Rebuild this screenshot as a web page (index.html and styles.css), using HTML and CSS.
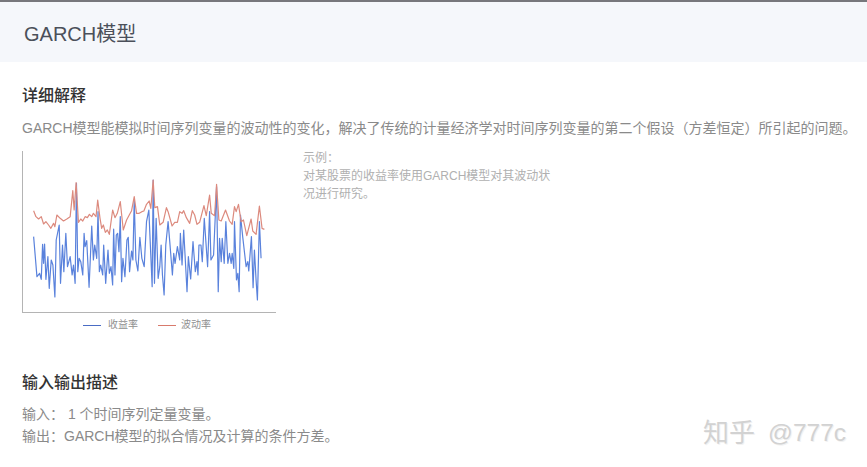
FILE: index.html
```html
<!DOCTYPE html>
<html lang="zh-CN">
<head>
<meta charset="utf-8">
<title>GARCH模型</title>
<link rel="stylesheet" href="styles.css">
</head>
<body>
<header class="title-bar"><h1 class="title">GARCH模型</h1></header>
<main class="content">
  <section class="explain">
    <h2 class="heading">详细解释</h2>
    <p class="lead">GARCH模型能模拟时间序列变量的波动性的变化，解决了传统的计量经济学对时间序列变量的第二个假设（方差恒定）所引起的问题。</p>
    <div class="example">
      <figure class="chart">
        <svg class="plot" viewBox="38 18 762 483" preserveAspectRatio="none">
          <polyline class="line-blue" points="70,275 80,395 88,385 93,403 97,298 100,355 103,297 107,403 113,335 117,430 123,345 128,360 134,456 138,285 147,240 151,415 157,300 161,380 167,265 172,365 180,335 186,390 190,360 195,415 199,115 203,380 207,340 212,350 218,390 222,265 225,305 230,287 237,427 245,243 250,345 254,300 260,340 264,200 268,380 272,360 278,390 281,300 287,415 294,315 298,385 303,365 308,420 311,252 315,390 319,270 323,265 327,320 331,215 335,410 339,340 345,395 351,285 355,277 359,380 365,318 369,345 373,165 378,345 384,378 390,277 396,340 403,365 410,230 417,195 427,425 430,105 434,415 439,220 445,400 450,365 454,300 458,390 463,450 468,300 475,230 480,290 488,390 492,325 496,355 503,305 510,345 512,265 517,360 522,255 532,440 536,335 543,402 550,290 557,380 562,350 565,390 568,300 574,300 578,350 584,220 594,365 600,200 604,345 612,330 621,125 626,440 630,280 635,350 638,280 644,355 649,230 655,355 660,325 665,355 668,325 673,370 675,230 681,405 685,385 689,440 693,210 700,278 710,365 715,350 718,378 726,275 731,428 735,315 740,405 744,465 750,230 755,340"/>
          <polyline class="line-red" points="70,197 77,215 85,222 93,215 100,237 107,230 115,240 122,250 130,235 134,245 140,210 150,220 160,228 170,222 180,215 188,137 192,195 198,113 205,232 212,222 218,228 225,215 232,218 238,208 245,215 250,205 258,215 263,165 270,220 275,250 280,240 286,262 292,255 298,268 308,195 315,218 322,205 331,170 340,255 350,225 358,210 365,197 373,155 380,205 388,205 396,200 402,198 410,178 418,168 423,190 430,105 435,188 443,185 450,240 460,232 470,188 475,200 487,243 495,232 503,232 510,200 517,205 522,197 530,218 540,235 548,197 555,210 562,238 570,232 583,182 590,212 600,150 605,205 615,212 621,118 628,225 635,228 648,195 660,228 668,238 675,185 680,200 687,178 695,230 702,225 712,272 725,222 730,258 740,268 750,183 758,250 765,253"/>
        </svg>
        <figcaption class="legend">
          <span class="key"><i class="swatch swatch-blue"></i>收益率</span>
          <span class="key"><i class="swatch swatch-red"></i>波动率</span>
        </figcaption>
      </figure>
      <p class="note">示例：<br>对某股票的收益率使用GARCH模型对其波动状况进行研究。</p>
    </div>
  </section>
  <section class="io">
    <h2 class="heading">输入输出描述</h2>
    <p class="io-text">输入： 1 个时间序列定量变量。<br>输出：GARCH模型的拟合情况及计算的条件方差。</p>
  </section>
</main>
<div class="watermark"><span class="mark-cn">知乎</span><span>@777c</span></div>
</body>
</html>
```
FILE: styles.css
```css
* { box-sizing: border-box; }
html, body { margin: 0; padding: 0; }
body {
  position: relative;
  width: 867px;
  height: 467px;
  overflow: hidden;
  background: #fff;
  font-family: "Liberation Sans", "Noto Sans CJK SC", sans-serif;
}
.title-bar {
  height: 62px;
  border-top: 2px solid #77777c;
  background: #f5f7fb;
  padding: 0 24px;
  display: flex;
  align-items: center;
}
.title { margin: 0; font-size: 20px; font-weight: 400; color: #4b505a; }
.content { padding: 0 17px 0 22px; }
.heading { margin: 0; font-size: 16px; line-height: 22px; font-weight: 500; color: #333; }
.explain { padding-top: 23px; }
.lead { margin: 10px 0 0; font-size: 14px; line-height: 22px; color: #8a8a8a; white-space: nowrap; }
.example { display: flex; align-items: flex-start; margin-top: 12px; }
.chart { margin: 0; width: 254px; flex: none; }
.plot {
  display: block;
  width: 254px;
  height: 162px;
  border-left: 1px solid #b4b4b4;
  border-bottom: 1px solid #b4b4b4;
}
.line-blue, .line-red { fill: none; vector-effect: non-scaling-stroke; stroke-linejoin: round; }
.line-blue { stroke: #5a82dc; stroke-width: 1.2; }
.line-red { stroke: #dc8a7e; stroke-width: 1.2; }
.legend {
  display: flex;
  justify-content: center;
  gap: 20px;
  margin-top: 5px;
  padding-right: 4px;
  font-size: 10px;
  line-height: 14px;
  color: #8f8f8f;
}
.key { display: flex; align-items: center; gap: 7px; }
.key + .key { gap: 5px; }
.swatch { display: block; width: 18px; height: 1px; }
.swatch-blue { background: #4a6cc4; }
.swatch-red { background: #d87a6c; }
.note { margin: -2px 0 0 27px; width: 250px; font-size: 12px; line-height: 18px; color: #b0b0b0; }
.io { margin-top: 40px; }
.io-text { margin: 9px 0 0; font-size: 14px; line-height: 22px; color: #8a8a8a; }
.watermark {
  position: absolute;
  left: 703px;
  top: 417px;
  display: flex;
  gap: 13px;
  font-size: 24.5px;
  line-height: 32px;
  color: #d2d2d2;
  white-space: nowrap;
  text-shadow: 1px 1px 0 #f2f2f2;
}
.mark-cn { font-size: 26px; }
```
